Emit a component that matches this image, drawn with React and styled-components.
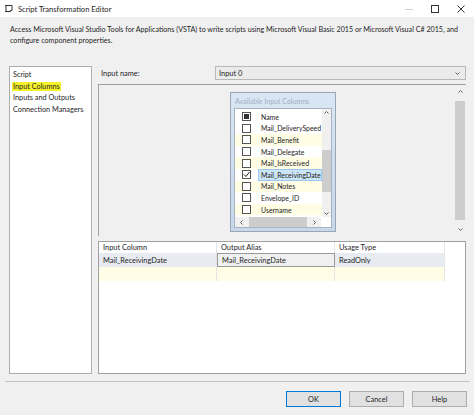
import React from "react"
import styled, { createGlobalStyle } from "styled-components"

const GlobalStyle = createGlobalStyle`
  html, body { margin: 0; padding: 0; background: #f0f0f0; }
  body { font-family: Lato, "Noto Sans", sans-serif; color: #1e1e1e; }
`

const Window = styled.div`
  width: 474px;
  height: 415px;
  display: flex;
  flex-direction: column;
  background: #f0f0f0;
  overflow: hidden;
  white-space: nowrap;
`

const TitleBar = styled.div`
  height: 17px;
  background: #fff;
  display: flex;
  align-items: center;
  padding-left: 4px;
  font-size: 7.6px;
`

const TitleText = styled.span`
  margin-left: 5px;
  flex: 1;
`

const Control = styled.div`
  width: 26px;
  height: 17px;
  display: flex;
  align-items: center;
  justify-content: center;
`

const Description = styled.div`
  height: 38px;
  padding: 8px 10px 0;
  box-sizing: border-box;
  font-size: 7.15px;
  line-height: 10.5px;
`

const Body = styled.div`
  display: flex;
  gap: 6px;
  margin-top: 11px;
  padding: 0 8px 0 9px;
  height: 308px;
`

const Nav = styled.div`
  width: 83px;
  background: #fff;
  border: 1px solid #adadad;
  box-sizing: border-box;
  padding: 2px 3px;
  font-size: 7.3px;
  line-height: 11.6px;
`

const NavItem = styled.div`
  span {
    background: ${p => (p.marked ? "#f5f22c" : "transparent")};
    padding: 0 1px;
    margin-left: -1px;
  }
`

const Main = styled.div`
  flex: 1;
  display: flex;
  flex-direction: column;
`

const NameRow = styled.div`
  display: flex;
  align-items: center;
  height: 14px;
  font-size: 7.4px;
`

const Label = styled.div`
  width: 114px;
  padding-left: 3px;
`

const Combo = styled.div`
  flex: 1;
  height: 14px;
  box-sizing: border-box;
  border: 1px solid #b8b8b8;
  background: #ebebeb;
  display: flex;
  align-items: center;
  justify-content: space-between;
  padding: 0 4px 0 3px;
`

const UpperBox = styled.div`
  margin-top: 4px;
  height: 152px;
  border-top: 1px solid #a0a0a0;
  border-left: 1px solid #a0a0a0;
  box-sizing: border-box;
  display: flex;
`

const UpperContent = styled.div`
  flex: 1;
  padding: 7px 0 0 131px;
`

const VScroll = styled.div`
  width: ${p => p.w || 10}px;
  margin: ${p => p.m || "3px 1px 3px 0"};
  display: flex;
  flex-direction: column;
  align-items: center;
  background: #f0f0f0;
`

const Thumb = styled.div`
  background: #cdcdcd;
  ${p => (p.horizontal ? `height: 100%; width: ${p.size}px;` : `width: 100%; height: ${p.size}px;`)}
  margin: ${p => p.m || 0};
`

const Spacer = styled.div`
  flex: 1;
`

const Arrow = styled.svg`
  width: 7px;
  height: 7px;
  flex-shrink: 0;
`

const AvailableBox = styled.div`
  width: 106px;
  height: 140px;
  box-sizing: border-box;
  border: 1px solid #9aa6b4;
  background: linear-gradient(#d9e6f3, #c7d8ec);
  padding: 2px 3px 3px 3px;
  display: flex;
  flex-direction: column;
`

const BoxTitle = styled.div`
  font-size: 7px;
  color: #9eb0c4;
  height: 13px;
  line-height: 13px;
  padding-left: 1px;
`

const ListFrame = styled.div`
  flex: 1;
  background: #fff;
  border: 1px solid #a9b3bf;
  display: flex;
  flex-direction: column;
`

const ListTop = styled.div`
  flex: 1;
  display: flex;
`

const Rows = styled.div`
  flex: 1;
  padding-top: 2px;
`

const Row = styled.div`
  display: flex;
  height: 11.6px;
  align-items: center;
  font-size: 6.9px;
  background: ${p => (p.alt ? "#fffde3" : "transparent")};
`

const CheckCell = styled.div`
  width: 23px;
  display: flex;
  justify-content: center;
`

const Check = styled.div`
  width: 7px;
  height: 7px;
  border: 1px solid #555;
  background: #fff;
  display: flex;
  align-items: center;
  justify-content: center;
`

const Fill = styled.div`
  width: 5px;
  height: 5px;
  background: #333;
`

const NameCell = styled.div`
  flex: 1;
  height: 100%;
  display: flex;
  align-items: center;
  padding-left: 2px;
  box-sizing: border-box;
  background: ${p => (p.selected ? "#cce4f7" : "transparent")};
  border: 1px solid ${p => (p.selected ? "#99c9ef" : "transparent")};
`

const HScroll = styled.div`
  height: 10px;
  display: flex;
  align-items: center;
  background: #f0f0f0;
  padding: 0 3px;
  margin-right: 10px;
`

const Grid = styled.div`
  margin-top: 5px;
  flex: 1;
  background: #fff;
  border: 1px solid #a0a0a0;
  display: flex;
  flex-direction: column;
  font-size: 7.4px;
`

const GridRow = styled.div`
  display: flex;
  height: ${p => p.h || 14}px;
`

const Cell = styled.div`
  width: ${p => p.w}px;
  box-sizing: border-box;
  display: flex;
  align-items: center;
  padding-left: 4px;
  border-right: 1px solid #e4e4e4;
  background: ${p => p.bg || "transparent"};
  ${p => p.edit && "border: 1px solid #9a9a9a; background: #f0f0f0;"}
`

const Separator = styled.div`
  margin: 7px 4px 0 5px;
  border-top: 1px solid #c4c4c4;
`

const Buttons = styled.div`
  display: flex;
  justify-content: flex-end;
  gap: 8px;
  padding: 9px 7px 0 0;
`

const Button = styled.div`
  width: 55px;
  height: 16px;
  box-sizing: border-box;
  background: #e1e1e1;
  border: 1px solid ${p => (p.primary ? "#0078d7" : "#adadad")};
  font-size: 7.4px;
  display: flex;
  align-items: center;
  justify-content: center;
`

const Up = () => (
  <Arrow viewBox="0 0 7 7"><path d="M1.5 4.5 L3.5 2.5 L5.5 4.5" fill="none" stroke="#606060" strokeWidth="1" /></Arrow>
)
const Down = () => (
  <Arrow viewBox="0 0 7 7"><path d="M1.5 2.5 L3.5 4.5 L5.5 2.5" fill="none" stroke="#606060" strokeWidth="1" /></Arrow>
)
const Left = () => (
  <Arrow viewBox="0 0 7 7"><path d="M4.5 1.5 L2.5 3.5 L4.5 5.5" fill="none" stroke="#606060" strokeWidth="1" /></Arrow>
)
const Right = () => (
  <Arrow viewBox="0 0 7 7"><path d="M2.5 1.5 L4.5 3.5 L2.5 5.5" fill="none" stroke="#606060" strokeWidth="1" /></Arrow>
)

const columns = [
  { name: "Mail_DeliverySpeed" },
  { name: "Mail_Benefit" },
  { name: "Mail_Delegate" },
  { name: "Mail_IsReceived" },
  { name: "Mail_ReceivingDate", checked: true },
  { name: "Mail_Notes" },
  { name: "Envelope_ID" },
  { name: "Username" },
]

const App = () => (
  <Window>
    <GlobalStyle />
    <TitleBar>
      <svg width="9" height="9" viewBox="0 0 9 9">
        <path d="M2 1.5 H8 V6.5 M2 1.5 V7.5 H6.5 V6.5 H8 M1 1.5 H2 M1 7.5 H2" fill="none" stroke="#333" strokeWidth="1" />
      </svg>
      <TitleText>Script Transformation Editor</TitleText>
      <Control>
        <svg width="8" height="8" viewBox="0 0 8 8"><path d="M0 4.5 H8" stroke="#d0d0d0" /></svg>
      </Control>
      <Control>
        <svg width="8" height="8" viewBox="0 0 8 8"><rect x="0.5" y="0.5" width="7" height="7" fill="none" stroke="#333" /></svg>
      </Control>
      <Control>
        <svg width="8" height="8" viewBox="0 0 8 8"><path d="M0.5 0.5 L7.5 7.5 M7.5 0.5 L0.5 7.5" stroke="#333" /></svg>
      </Control>
    </TitleBar>

    <Description>
      Access Microsoft Visual Studio Tools for Applications (VSTA) to write scripts using Microsoft Visual Basic 2015 or Microsoft Visual C# 2015, and
      <br />
      configure component properties.
    </Description>

    <Body>
      <Nav>
        <NavItem><span>Script</span></NavItem>
        <NavItem marked><span>Input Columns</span></NavItem>
        <NavItem><span>Inputs and Outputs</span></NavItem>
        <NavItem><span>Connection Managers</span></NavItem>
      </Nav>

      <Main>
        <NameRow>
          <Label>Input name:</Label>
          <Combo>
            <span>Input 0</span>
            <Down />
          </Combo>
        </NameRow>

        <UpperBox>
          <UpperContent>
            <AvailableBox>
              <BoxTitle>Available Input Columns</BoxTitle>
              <ListFrame>
                <ListTop>
                  <Rows>
                    <Row>
                      <CheckCell><Check><Fill /></Check></CheckCell>
                      <NameCell>Name</NameCell>
                    </Row>
                    {columns.map((c, i) => (
                      <Row key={c.name} alt={i % 2 === 1}>
                        <CheckCell>
                          <Check>
                            {c.checked && (
                              <svg width="7" height="7" viewBox="0 0 7 7"><path d="M1 3.5 L3 5.5 L6.5 1" fill="none" stroke="#222" strokeWidth="1" /></svg>
                            )}
                          </Check>
                        </CheckCell>
                        <NameCell selected={c.checked}>{c.name}</NameCell>
                      </Row>
                    ))}
                  </Rows>
                  <VScroll w={10} m="0">
                    <Up />
                    <Thumb size={42} m="34px 0 0 0" />
                    <Spacer />
                    <Down />
                  </VScroll>
                </ListTop>
                <HScroll>
                  <Left />
                  <Thumb horizontal size={64} m="0 4px" />
                  <Spacer />
                  <Right />
                </HScroll>
              </ListFrame>
            </AvailableBox>
          </UpperContent>
          <VScroll>
            <Up />
            <Thumb size={120} m="6px 0" />
            <Spacer />
            <Down />
          </VScroll>
        </UpperBox>

        <Grid>
          <GridRow h={11}>
            <Cell w={118}>Input Column</Cell>
            <Cell w={118}>Output Alias</Cell>
            <Cell w={110}>Usage Type</Cell>
          </GridRow>
          <GridRow>
            <Cell w={118} bg="#e8ebf1">Mail_ReceivingDate</Cell>
            <Cell w={118} edit>Mail_ReceivingDate</Cell>
            <Cell w={110} bg="#e8ebf1">ReadOnly</Cell>
          </GridRow>
          <GridRow>
            <Cell w={118} bg="#fffde6" />
            <Cell w={118} bg="#fffde6" />
            <Cell w={110} bg="#fffde6" />
          </GridRow>
        </Grid>
      </Main>
    </Body>

    <Separator />
    <Buttons>
      <Button primary>OK</Button>
      <Button>Cancel</Button>
      <Button>Help</Button>
    </Buttons>
  </Window>
)

export default App
